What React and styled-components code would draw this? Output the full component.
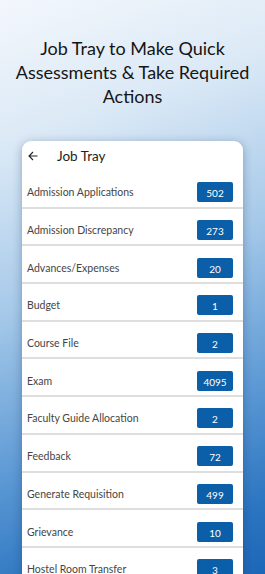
import React from "react";
import styled, { createGlobalStyle } from "styled-components";

const GlobalStyle = createGlobalStyle`
	html, body {
		margin: 0;
		padding: 0;
	}
	body {
		font-family: Lato, "Noto Sans", sans-serif;
	}
`;

const Screen = styled.div`
	width: 265px;
	height: 574px;
	overflow: hidden;
	display: flex;
	flex-direction: column;
	align-items: center;
	background: linear-gradient(
		160deg,
		#f3f7fc 0%,
		#dbe9f6 22%,
		#a6c9e9 47%,
		#5b98d4 72%,
		#2a74c0 90%,
		#1d67b8 100%
	);
`;

const Headline = styled.h1`
	margin: 36px 0 0;
	width: 100%;
	text-align: center;
	font-family: Lato, sans-serif;
	font-weight: 400;
	font-size: 18px;
	line-height: 24px;
	color: #151515;
`;

const Card = styled.div`
	margin-top: 33px;
	width: 221px;
	flex: 1;
	background: #ffffff;
	border-radius: 9px 9px 0 0;
	box-shadow: 0 2px 10px rgba(20, 50, 90, 0.35);
	display: flex;
	flex-direction: column;
`;

const TopBar = styled.div`
	height: 30px;
	display: flex;
	align-items: center;
	padding-left: 6px;
`;

const BackButton = styled.span`
	width: 10px;
	height: 10px;
	display: flex;
	margin-right: 19px;
`;

const TopTitle = styled.span`
	font-family: Lato, sans-serif;
	font-size: 13.5px;
	color: #222222;
`;

const Row = styled.div`
	height: 37.7px;
	box-sizing: border-box;
	padding: 7px 10px 0 5px;
	display: flex;
	align-items: center;
	justify-content: space-between;
	border-bottom: 2px solid #dedede;
`;

const Label = styled.span`
	font-family: Lato, sans-serif;
	font-size: 10.5px;
	color: #454545;
`;

const Badge = styled.span`
	width: 36px;
	height: 20px;
	border-radius: 2px;
	background: #0b5fa8;
	color: #ffffff;
	font-family: Lato, sans-serif;
	font-size: 10px;
	display: flex;
	align-items: center;
	justify-content: center;
	padding-top: 2px;
	box-sizing: border-box;
`;

const items = [
	["Admission Applications", 502],
	["Admission Discrepancy", 273],
	["Advances/Expenses", 20],
	["Budget", 1],
	["Course File", 2],
	["Exam", 4095],
	["Faculty Guide Allocation", 2],
	["Feedback", 72],
	["Generate Requisition", 499],
	["Grievance", 10],
	["Hostel Room Transfer", 3],
];

function App() {
	return (
		<>
			<GlobalStyle />
			<Screen>
				<Headline>
					Job Tray to Make Quick
					<br />
					Assessments &amp; Take Required
					<br />
					Actions
				</Headline>
				<Card>
					<TopBar>
						<BackButton>
							<svg width="10" height="10" viewBox="0 0 10 10">
								<path
									d="M9.5 5H1M5 1L1 5L5 9"
									fill="none"
									stroke="#222"
									strokeWidth="1.1"
								/>
							</svg>
						</BackButton>
						<TopTitle>Job Tray</TopTitle>
					</TopBar>
					{items.map(([name, count]) => (
						<Row key={name}>
							<Label>{name}</Label>
							<Badge>{count}</Badge>
						</Row>
					))}
				</Card>
			</Screen>
		</>
	);
}

export default App;
